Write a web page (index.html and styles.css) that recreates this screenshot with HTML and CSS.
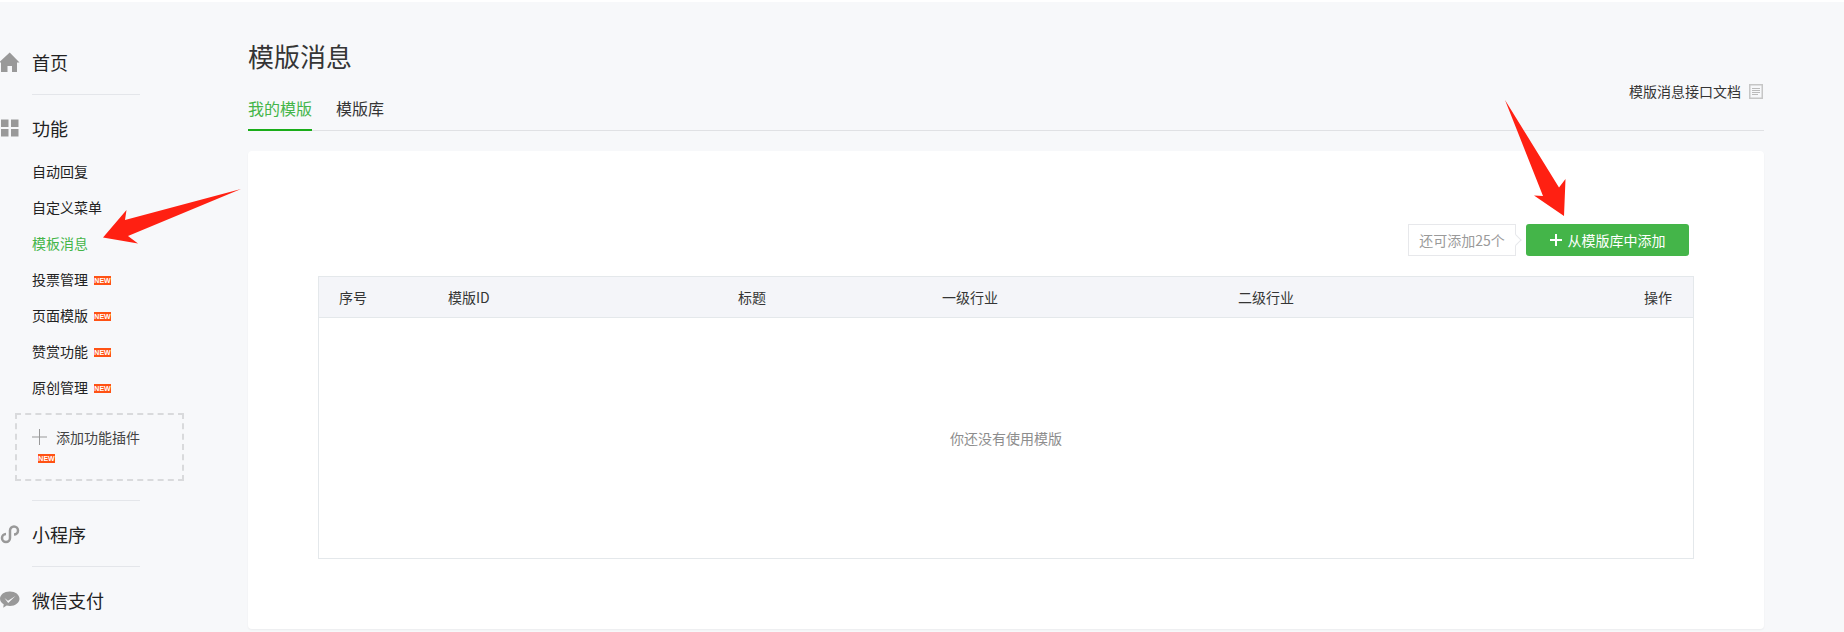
FILE: index.html
```html
<!DOCTYPE html>
<html lang="zh-CN">
<head>
  <meta charset="UTF-8" />
  <title>模版消息</title>
  <link rel="stylesheet" href="styles.css">
</head>
<body>
  <div class="page">
    <div class="sidebar">
      <div class="nav-head first">
        <span class="nav-icon">
          <svg width="20" height="21" viewBox="0 0 20 21"><path d="M9.700 0.500 L19.500 10.500 L17 10.500 L17 20 L12 20 L12 14 L7.500 14 L7.500 20 L1 20 L1 10.500 L0 10.500 L0 9.600 Z" fill="#999"/></svg>
        </span>
        <span class="nav-text">首页</span>
      </div>
      <div class="nav-line"></div>
      <div class="nav-head">
        <span class="nav-icon">
          <svg width="20" height="18" viewBox="0 0 20 18"><path d="M1 0.500h7.500v7.500h-7.500zM11 0.500h7.500v7.500h-7.500zM1 10h7.500v7.500h-7.500zM11 10h7.500v7.500h-7.500z" fill="#999"/></svg>
        </span>
        <span class="nav-text">功能</span>
      </div>
      <ul class="nav-list">
        <li>自动回复</li>
        <li>自定义菜单</li>
        <li class="active">模板消息</li>
        <li>投票管理<span class="new">NEW</span></li>
        <li>页面模版<span class="new">NEW</span></li>
        <li>赞赏功能<span class="new">NEW</span></li>
        <li>原创管理<span class="new">NEW</span></li>
      </ul>
      <div class="add-plugin">
        <div class="add-line">
          <svg width="15" height="16" viewBox="0 0 15 16"><path d="M7.500 0v16M0 8h15" stroke="#999" stroke-width="1" fill="none"/></svg>
          添加功能插件
        </div>
        <span class="new">NEW</span>
      </div>
      <div class="nav-line low"></div>
      <div class="nav-head">
        <span class="nav-icon">
          <svg width="20" height="19" viewBox="0 0 20 19"><path d="M10 5.500v7.500a4 4 0 1 1-4-4M10 13V5.500a4 4 0 1 1 4 4" stroke="#999" stroke-width="2.500" fill="none"/></svg>
        </span>
        <span class="nav-text">小程序</span>
      </div>
      <div class="nav-line"></div>
      <div class="nav-head">
        <span class="nav-icon">
          <svg width="20" height="18" viewBox="0 0 20 18"><path d="M10 0.500c5.300 0 9.500 3.200 9.500 7.200s-4.200 7.200-9.500 7.200c-1.200 0-2.300-0.200-3.300-0.500l-3.500 2.300 0.500-3.400c-2-1.300-3.700-3.300-3.700-5.600 0-4 4.200-7.200 9.500-7.200z" fill="#999"/><path d="M4.500 7l3.500 2.800 7.500-4.800-7.300 7z" fill="#f7f8fa"/></svg>
        </span>
        <span class="nav-text">微信支付</span>
      </div>
    </div>

    <div class="main">
      <h1>模版消息</h1>
      <div class="tab-row">
        <div class="tabs">
          <a class="tab active">我的模版</a>
          <a class="tab">模版库</a>
        </div>
        <a class="doc-link">
          模版消息接口文档
          <svg width="14" height="15" viewBox="0 0 14 15"><path d="M0 0h14v15h-14z" fill="#c6c6c6"/><path d="M1.500 1.500h11v12h-11z" fill="#f7f8fa"/><path d="M3 4.500h8M3 6.500h8M3 8.500h8M3 10.500h6" stroke="#bbb" stroke-width="1"/></svg>
        </a>
      </div>

      <div class="card">
        <div class="toolbar">
          <span class="quota">还可添加25个</span>
          <a class="btn-add">
            <svg width="12" height="12" viewBox="0 0 12 12"><path d="M6 0v12M0 6h12" stroke="#fff" stroke-width="2" fill="none"/></svg>
            从模版库中添加
          </a>
        </div>
        <table class="tpl-table">
          <colgroup>
            <col class="c-no"><col class="c-id"><col class="c-title"><col class="c-first"><col class="c-second"><col>
          </colgroup>
          <thead>
            <tr>
              <th>序号</th>
              <th>模版ID</th>
              <th>标题</th>
              <th>一级行业</th>
              <th>二级行业</th>
              <th class="op">操作</th>
            </tr>
          </thead>
          <tbody>
            <tr>
              <td class="empty" colspan="6">你还没有使用模版</td>
            </tr>
          </tbody>
        </table>
      </div>
    </div>
  </div>

  <svg class="arrows" width="1844" height="632" viewBox="0 0 1844 632">
    <path d="M241 189 L125 220 L126.500 210 L103 237.500 L138 243.500 L128 236 Z" fill="#ff2012"/>
    <path d="M1505 100 L1543 196 L1534 195.500 L1564 216 L1565.500 179 L1559 187.500 Z" fill="#ff2012"/>
  </svg>
</body>
</html>
```

FILE: styles.css
```css
html, body {
  margin: 0;
  padding: 0;
}
body {
  background: #fff;
  padding-top: 2px;
  font-family: "Noto Sans CJK SC", "Liberation Sans", sans-serif;
  color: #353535;
  overflow: hidden;
}
.page {
  display: flex;
  height: 630px;
  background: #f7f8fa;
}
.sidebar {
  width: 248px;
  flex: none;
}
.nav-head {
  display: flex;
  align-items: center;
  height: 36px;
  font-size: 18px;
  color: #222;
}
.nav-head.first {
  margin-top: 42px;
}
.nav-icon {
  width: 32px;
  flex: none;
  display: flex;
}
.nav-text {
  margin-bottom: 1px;
}
.nav-line {
  width: 108px;
  height: 1px;
  margin: 14px 0 15px 32px;
  background: #e4e6ea;
}
.nav-line.low {
  margin-top: 19px;
}
.nav-list {
  list-style: none;
  margin: 8px 0 0;
  padding: 0;
}
.nav-list li {
  display: flex;
  align-items: center;
  height: 36px;
  box-sizing: border-box;
  padding: 0 0 2px 32px;
  font-size: 14px;
  color: #222;
}
.nav-list li.active {
  color: #44b549;
}
.new {
  display: inline-block;
  width: 17px;
  height: 9px;
  margin: 2px 0 0 6px;
  background: #ff5214;
  color: #fff;
  font-family: "Liberation Sans", sans-serif;
  font-size: 7px;
  font-weight: bold;
  line-height: 9px;
  text-align: center;
}
.add-plugin {
  width: 169px;
  height: 68px;
  box-sizing: border-box;
  margin: 7px 0 0 15px;
  padding: 12px 0 0 15px;
  border: 2px dashed #d9dadc;
}
.add-line {
  display: flex;
  align-items: center;
  gap: 9px;
  height: 20px;
  font-size: 14px;
  color: #444;
}
.add-plugin .new {
  display: block;
  margin: 7px 0 0 6px;
}
.main {
  width: 1516px;
  flex: none;
}
h1 {
  margin: 0;
  padding-top: 38px;
  height: 42px;
  font-size: 26px;
  font-weight: normal;
  line-height: 32px;
  color: #353535;
}
.tab-row {
  display: flex;
  justify-content: space-between;
  align-items: flex-start;
  height: 48px;
  border-bottom: 1px solid #e0e1e4;
}
.tabs {
  display: flex;
  gap: 24px;
  align-self: flex-end;
  margin-bottom: -1px;
}
.tab {
  height: 41px;
  border-bottom: 2px solid transparent;
  font-size: 16px;
  line-height: 41px;
  color: #353535;
}
.tab.active {
  color: #44b549;
  border-bottom-color: #1aad19;
}
.doc-link {
  display: flex;
  align-items: center;
  gap: 8px;
  height: 20px;
  margin: -1px 1px 0 0;
  font-size: 14px;
  color: #353535;
}
.card {
  height: 405px;
  margin-top: 20px;
  padding: 73px 70px 0;
  background: #fff;
  border-radius: 4px;
  box-shadow: 0 1px 2px rgba(0, 0, 0, 0.05);
}
.toolbar {
  display: flex;
  justify-content: flex-end;
  gap: 10px;
  padding-right: 5px;
}
.quota {
  position: relative;
  width: 108px;
  height: 32px;
  box-sizing: border-box;
  border: 1px solid #e7e8eb;
  font-size: 14px;
  line-height: 30px;
  text-align: center;
  color: #9a9a9a;
}
.quota::after {
  content: "";
  position: absolute;
  top: 11px;
  right: -5px;
  width: 7px;
  height: 7px;
  background: #fff;
  border: solid #e7e8eb;
  border-width: 1px 1px 0 0;
  transform: rotate(45deg);
}
.btn-add {
  display: flex;
  align-items: center;
  justify-content: center;
  gap: 6px;
  width: 163px;
  height: 32px;
  border-radius: 3px;
  background: #44b549;
  color: #fff;
  font-size: 14px;
}
.tpl-table {
  width: 1376px;
  margin-top: 20px;
  border-collapse: separate;
  border-spacing: 0;
  border: 1px solid #e4e8eb;
  table-layout: fixed;
  font-size: 14px;
}
.c-no { width: 109px; }
.c-id { width: 290px; }
.c-title { width: 204px; }
.c-first { width: 296px; }
.c-second { width: 300px; }
.tpl-table th {
  height: 40px;
  padding: 0 0 0 20px;
  background: #f4f5f9;
  border-bottom: 1px solid #e4e8eb;
  font-weight: normal;
  text-align: left;
  color: #353535;
}
.tpl-table th.op {
  padding-right: 21px;
  text-align: right;
}
.empty {
  height: 240px;
  padding: 0;
  text-align: center;
  color: #8d8d8d;
}
.arrows {
  position: absolute;
  left: 0;
  top: 0;
  pointer-events: none;
}
```
